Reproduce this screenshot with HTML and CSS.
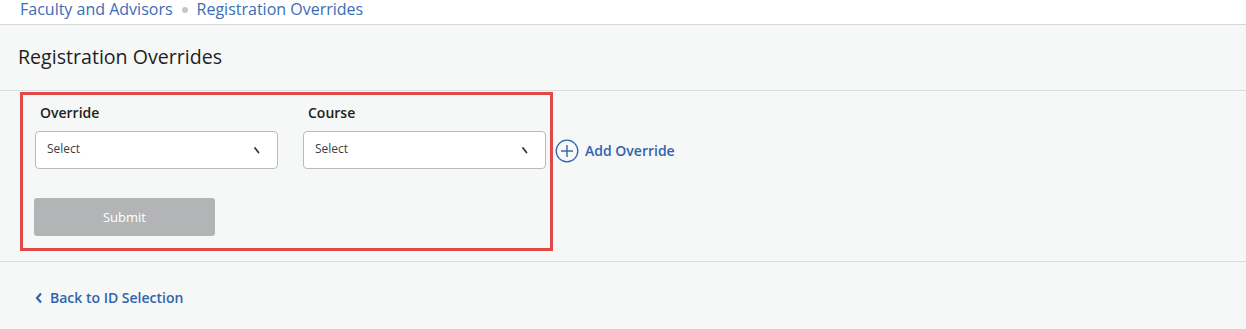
FILE: index.html
```html
<!DOCTYPE html>
<html lang="en">
<head>
<meta charset="utf-8">
<title>Registration Overrides</title>
<link rel="stylesheet" href="styles.css">
</head>
<body>
<nav class="breadcrumbs">
  <a class="crumb" href="#">Faculty and Advisors</a>
  <span class="dot"></span>
  <a class="crumb" href="#">Registration Overrides</a>
</nav>
<header class="page-header">
  <h1>Registration Overrides</h1>
</header>
<section class="content">
  <div class="form-row">
    <div class="override-box">
      <div class="fields">
        <div class="field">
          <label class="field-label">Override</label>
          <div class="select">
            <span>Select</span>
            <svg class="caret" width="6" height="7" viewBox="0 0 6 7"><line x1="1" y1="1" x2="4.5" y2="5.5" stroke="#333" stroke-width="1.8" stroke-linecap="round"/></svg>
          </div>
        </div>
        <div class="field">
          <label class="field-label">Course</label>
          <div class="select">
            <span>Select</span>
            <svg class="caret" width="6" height="7" viewBox="0 0 6 7"><line x1="1" y1="1" x2="4.5" y2="5.5" stroke="#333" stroke-width="1.8" stroke-linecap="round"/></svg>
          </div>
        </div>
      </div>
      <button class="submit" type="button">Submit</button>
    </div>
    <a class="add-override" href="#">
      <svg width="24" height="24" viewBox="0 0 24 24"><circle cx="12" cy="12" r="10.8" fill="none" stroke="#2f64ad" stroke-width="1.3"/><line x1="12" y1="6" x2="12" y2="18" stroke="#2f64ad" stroke-width="1.4"/><line x1="6" y1="12" x2="18" y2="12" stroke="#2f64ad" stroke-width="1.4"/></svg>
      <span>Add Override</span>
    </a>
  </div>
</section>
<footer class="page-footer">
  <a class="back" href="#">
    <svg width="8" height="12" viewBox="0 0 8 12"><polyline points="6,1.5 2,6 6,10.5" fill="none" stroke="#2f64ad" stroke-width="2.2"/></svg>
    <span>Back to ID Selection</span>
  </a>
</footer>
</body>
</html>
```
FILE: styles.css
```css
* { box-sizing: border-box; }
body {
  margin: 0;
  background: #f6f7f7;
  font-family: "Open Sans", "Liberation Sans", sans-serif;
  color: #1e1e1e;
}
a { text-decoration: none; }
.breadcrumbs {
  height: 25px;
  background: #ffffff;
  border-bottom: 1px solid #d6d7d7;
  padding-left: 20px;
  display: flex;
  align-items: flex-start;
  gap: 9px;
  font-size: 16px;
  line-height: 18px;
}
.crumb { color: #3b6db4; }
.dot {
  width: 6px;
  height: 6px;
  border-radius: 50%;
  background: #c4c6c8;
  margin-top: 7px;
}
.page-header {
  height: 66px;
  border-bottom: 1px solid #dcdddd;
  padding: 19px 0 0 18px;
}
.page-header h1 {
  margin: 0;
  font-size: 19.6px;
  font-weight: 400;
  line-height: 26px;
  color: #1f1f1f;
}
.content {
  padding: 1px 0 10px 20px;
  border-bottom: 1px solid #dcdddd;
}
.form-row {
  display: flex;
  align-items: flex-start;
}
.override-box {
  width: 533px;
  height: 159px;
  border: 3px solid #e34848;
  padding: 8px 4px 12px 12px;
}
.fields {
  display: flex;
  gap: 25px;
}
.field { width: 243px; }
.field-label {
  display: block;
  padding-left: 5px;
  font-size: 14px;
  font-weight: 600;
  line-height: 20px;
  margin-bottom: 8px;
  color: #222222;
}
.select {
  height: 38px;
  background: #ffffff;
  border: 1px solid #b9babb;
  border-radius: 4px;
  display: flex;
  align-items: center;
  justify-content: space-between;
  padding: 0 17px 0 11px;
  font-size: 12px;
  color: #3f3f3f;
}
.select span { margin-top: -4px; }
.caret { margin-top: 1px; }
.submit {
  margin-top: 29px;
  margin-left: -1px;
  width: 181px;
  height: 38px;
  border: none;
  border-radius: 3px;
  background: #b3b4b5;
  color: #ffffff;
  font-family: inherit;
  font-size: 13px;
  font-weight: 400;
  padding: 0;
}
.add-override {
  display: flex;
  align-items: center;
  gap: 6px;
  margin: 46px 0 0 2px;
  color: #2f64ad;
  font-size: 14px;
  font-weight: 600;
  line-height: 24px;
}
.add-override span { margin-top: 1px; }
.page-footer {
  padding: 25px 0 0 35px;
}
.back {
  display: inline-flex;
  align-items: center;
  gap: 7px;
  color: #2f64ad;
  font-size: 14px;
  font-weight: 600;
  line-height: 20px;
}
```
